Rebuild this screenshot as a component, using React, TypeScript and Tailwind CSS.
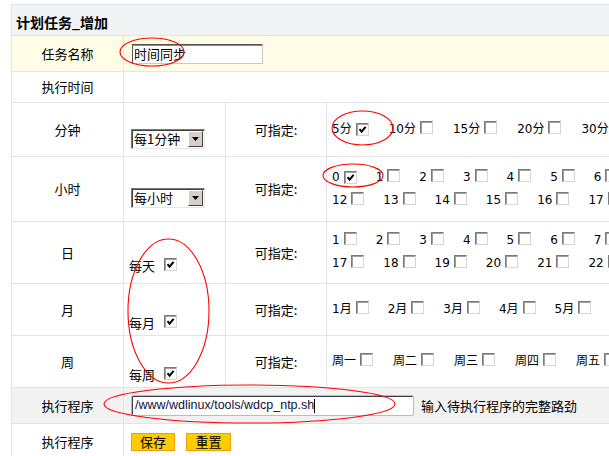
import React from 'react';

const HOURS_A = Array.from({ length: 12 }, (_, i) => i);
const HOURS_B = Array.from({ length: 12 }, (_, i) => i + 12);
const DAYS_A = Array.from({ length: 16 }, (_, i) => i + 1);
const DAYS_B = Array.from({ length: 15 }, (_, i) => i + 17);
const MONTHS = Array.from({ length: 12 }, (_, i) => `${i + 1}月`);
const WEEK = ['周一', '周二', '周三', '周四', '周五', '周六', '周日'];
const MINUTES = ['5分', '10分', '15分', '20分', '30分', '45分'];

function Box({ checked }: { checked?: boolean }) {
  return (
    <span className="inline-flex w-[13px] h-[13px] shrink-0 items-center justify-center bg-white border border-t-[#7a7a7a] border-l-[#7a7a7a] border-r-[#d8d6d0] border-b-[#d8d6d0] shadow-[inset_1px_1px_0_#a0a0a0]">
      {checked && (
        <svg width="9" height="9" viewBox="0 0 9 9">
          <path d="M1.5 4.2 L3.6 6.6 L7.6 1.8" fill="none" stroke="#000" strokeWidth="2" />
        </svg>
      )}
    </span>
  );
}

function Item({ label, checked, wide }: { label: string | number; checked?: boolean; wide?: boolean }) {
  return (
    <span className={`inline-flex shrink-0 items-start whitespace-nowrap ${wide ? 'mr-[20px]' : 'mr-[19px]'}`}>
      <span className="leading-[15px] pt-[1px]">{label}</span>
      <span className="ml-[4px]">
        <Box checked={checked} />
      </span>
    </span>
  );
}

function Select({ text }: { text: string }) {
  return (
    <div className="flex w-[74px] h-[20px] bg-white border border-t-[#7a7a7a] border-l-[#7a7a7a] border-r-[#e8e6e0] border-b-[#e8e6e0] shadow-[inset_1px_1px_0_#404040]">
      <span className="flex-1 pl-[2px] pt-[1px] text-[13px] leading-[16px]">{text}</span>
      <span className="w-[15px] h-[16px] mt-[1px] mr-[1px] flex items-center justify-center bg-[#d4d0c8] border border-t-white border-l-white border-r-[#404040] border-b-[#404040]">
        <svg width="7" height="4" viewBox="0 0 7 4">
          <path d="M0 0 H7 L3.5 4 Z" fill="#000" />
        </svg>
      </span>
    </div>
  );
}

export default function App() {
  return (
    <div className="relative w-[609px] h-[456px] overflow-hidden bg-white text-black font-['Noto_Sans_CJK_SC',sans-serif]">
      <div className="ml-[11px] mt-[4px] w-[820px] border-l border-t border-[#e1e4ea]">
        {/* header */}
        <div className="flex items-center h-[31px] border-b border-[#e1e4ea] bg-[#f2f3f5] pl-[4px]">
          <span className="text-[14px] font-bold leading-[18px] pt-[3px]">计划任务_增加</span>
        </div>

        {/* name */}
        <div className="flex h-[36px] border-b border-[#e1e4ea] bg-[#fffde6]">
          <div className="w-[112px] shrink-0 border-r border-[#e1e4ea] flex items-center justify-center text-[13px]">任务名称</div>
          <div className="flex-1 min-w-0 flex items-center pl-[8px]">
            <input
              readOnly
              value="时间同步"
              className="w-[131px] h-[20px] bg-white text-[13px] leading-[16px] px-[1px] outline-none border border-t-[#555] border-l-[#555] border-r-[#c8c8c8] border-b-[#c8c8c8] shadow-[inset_0_1px_0_#888] font-['Noto_Sans_CJK_SC',sans-serif]"
            />
          </div>
        </div>

        {/* exec time */}
        <div className="flex h-[31px] border-b border-[#e1e4ea]">
          <div className="w-[112px] shrink-0 border-r border-[#e1e4ea] flex items-center justify-center text-[13px]">执行时间</div>
          <div className="flex-1 min-w-0" />
        </div>

        {/* minutes */}
        <div className="flex h-[54px] border-b border-[#e1e4ea]">
          <div className="w-[112px] shrink-0 border-r border-[#e1e4ea] flex items-center justify-center text-[13px]">分钟</div>
          <div className="w-[102px] shrink-0 border-r border-[#e1e4ea] flex items-center pl-[7px] pt-[18px]">
            <Select text="每1分钟" />
          </div>
          <div className="w-[101px] shrink-0 border-r border-[#e1e4ea] flex items-center justify-center text-[13px]">可指定:</div>
          <div className="flex-1 min-w-0 overflow-hidden flex items-center pl-[5px] text-[12px] font-['DejaVu_Sans','Noto_Sans_CJK_SC',sans-serif]">
            <div className="flex whitespace-nowrap">
              {MINUTES.map((m, i) => (
                <Item key={m} label={m} checked={i === 0} wide />
              ))}
            </div>
          </div>
        </div>

        {/* hours */}
        <div className="flex h-[65px] border-b border-[#e1e4ea]">
          <div className="w-[112px] shrink-0 border-r border-[#e1e4ea] flex items-center justify-center text-[13px]">小时</div>
          <div className="w-[102px] shrink-0 border-r border-[#e1e4ea] flex items-center pl-[7px] pt-[18px]">
            <Select text="每小时" />
          </div>
          <div className="w-[101px] shrink-0 border-r border-[#e1e4ea] flex items-center justify-center text-[13px]">可指定:</div>
          <div className="flex-1 min-w-0 overflow-hidden flex flex-col justify-center gap-[5px] pl-[5px] text-[12px] font-['DejaVu_Sans','Noto_Sans_CJK_SC',sans-serif]">
            <div className="flex whitespace-nowrap">
              {HOURS_A.map((h) => (
                <Item key={h} label={h} checked={h === 0} />
              ))}
            </div>
            <div className="flex whitespace-nowrap">
              {HOURS_B.map((h) => (
                <Item key={h} label={h} />
              ))}
            </div>
          </div>
        </div>

        {/* day */}
        <div className="flex h-[62px] border-b border-[#e1e4ea]">
          <div className="w-[112px] shrink-0 border-r border-[#e1e4ea] flex items-center justify-center text-[13px]">日</div>
          <div className="w-[102px] shrink-0 border-r border-[#e1e4ea] flex items-center pl-[5px] pt-[26px] text-[13px]">
            <span className="leading-[16px]">每天</span>
            <span className="ml-[9px] -mt-[4px]">
              <Box checked />
            </span>
          </div>
          <div className="w-[101px] shrink-0 border-r border-[#e1e4ea] flex items-center justify-center text-[13px]">可指定:</div>
          <div className="flex-1 min-w-0 overflow-hidden flex flex-col justify-center gap-[5px] pl-[5px] text-[12px] font-['DejaVu_Sans','Noto_Sans_CJK_SC',sans-serif]">
            <div className="flex whitespace-nowrap">
              {DAYS_A.map((d) => (
                <Item key={d} label={d} />
              ))}
            </div>
            <div className="flex whitespace-nowrap">
              {DAYS_B.map((d) => (
                <Item key={d} label={d} />
              ))}
            </div>
          </div>
        </div>

        {/* month */}
        <div className="flex h-[52px] border-b border-[#e1e4ea]">
          <div className="w-[112px] shrink-0 border-r border-[#e1e4ea] flex items-center justify-center text-[13px]">月</div>
          <div className="w-[102px] shrink-0 border-r border-[#e1e4ea] flex items-center pl-[5px] pt-[26px] text-[13px]">
            <span className="leading-[16px]">每月</span>
            <span className="ml-[9px] -mt-[4px]">
              <Box checked />
            </span>
          </div>
          <div className="w-[101px] shrink-0 border-r border-[#e1e4ea] flex items-center justify-center text-[13px]">可指定:</div>
          <div className="flex-1 min-w-0 overflow-hidden flex items-center pl-[5px] text-[12px] font-['DejaVu_Sans','Noto_Sans_CJK_SC',sans-serif]">
            <div className="flex whitespace-nowrap">
              {MONTHS.map((m) => (
                <Item key={m} label={m} />
              ))}
            </div>
          </div>
        </div>

        {/* week */}
        <div className="flex h-[52px] border-b border-[#e1e4ea]">
          <div className="w-[112px] shrink-0 border-r border-[#e1e4ea] flex items-center justify-center text-[13px]">周</div>
          <div className="w-[102px] shrink-0 border-r border-[#e1e4ea] flex items-center pl-[5px] pt-[26px] text-[13px]">
            <span className="leading-[16px]">每周</span>
            <span className="ml-[9px] -mt-[4px]">
              <Box checked />
            </span>
          </div>
          <div className="w-[101px] shrink-0 border-r border-[#e1e4ea] flex items-center justify-center text-[13px]">可指定:</div>
          <div className="flex-1 min-w-0 overflow-hidden flex items-center pl-[5px] text-[12px] font-['DejaVu_Sans','Noto_Sans_CJK_SC',sans-serif]">
            <div className="flex whitespace-nowrap">
              {WEEK.map((w) => (
                <Item key={w} label={w} wide />
              ))}
            </div>
          </div>
        </div>

        {/* program */}
        <div className="flex h-[36px] border-b border-[#e1e4ea] bg-[#f2f2f2]">
          <div className="w-[112px] shrink-0 border-r border-[#e1e4ea] flex items-center justify-center text-[13px]">执行程序</div>
          <div className="flex-1 min-w-0 flex items-center pl-[7px]">
            <div className="w-[283px] h-[21px] shrink-0 bg-white rounded-[2px] border border-[#e9b954] shadow-[inset_1px_1px_0_#3c3c4c] flex items-center pl-[3px] text-[12.5px] text-[#10103a] font-['Liberation_Sans',Arial,sans-serif]">
              <span className="leading-[15px]">/www/wdlinux/tools/wdcp_ntp.sh</span>
              <span className="inline-block w-px h-[14px] bg-black" />
            </div>
            <span className="ml-[7px] text-[13px] whitespace-nowrap">输入待执行程序的完整路劲</span>
          </div>
        </div>

        {/* buttons */}
        <div className="flex h-[36px]">
          <div className="w-[112px] shrink-0 border-r border-[#e1e4ea] flex items-center justify-center text-[13px]">执行程序</div>
          <div className="flex-1 min-w-0 flex items-center gap-[11px] pl-[7px]">
            <button className="w-[44px] h-[18px] bg-[#ffcc00] border border-[#f0a000] text-[13px] leading-[16px] flex items-center justify-center">保存</button>
            <button className="w-[45px] h-[18px] bg-[#ffcc00] border border-[#f0a000] text-[13px] leading-[16px] flex items-center justify-center">重置</button>
          </div>
        </div>
      </div>

      {/* red annotation ellipses */}
      <svg className="absolute inset-0 pointer-events-none" width="609" height="456">
        <g fill="none" stroke="#ff0000" strokeWidth="1.1">
          <ellipse cx="152" cy="52" rx="32" ry="14" />
          <ellipse cx="362.5" cy="128" rx="30.5" ry="17" />
          <ellipse cx="353" cy="175.5" rx="30" ry="11.5" />
          <ellipse cx="168.5" cy="311" rx="40.5" ry="72" />
          <ellipse cx="249.5" cy="404" rx="145.5" ry="19" />
        </g>
      </svg>
    </div>
  );
}
